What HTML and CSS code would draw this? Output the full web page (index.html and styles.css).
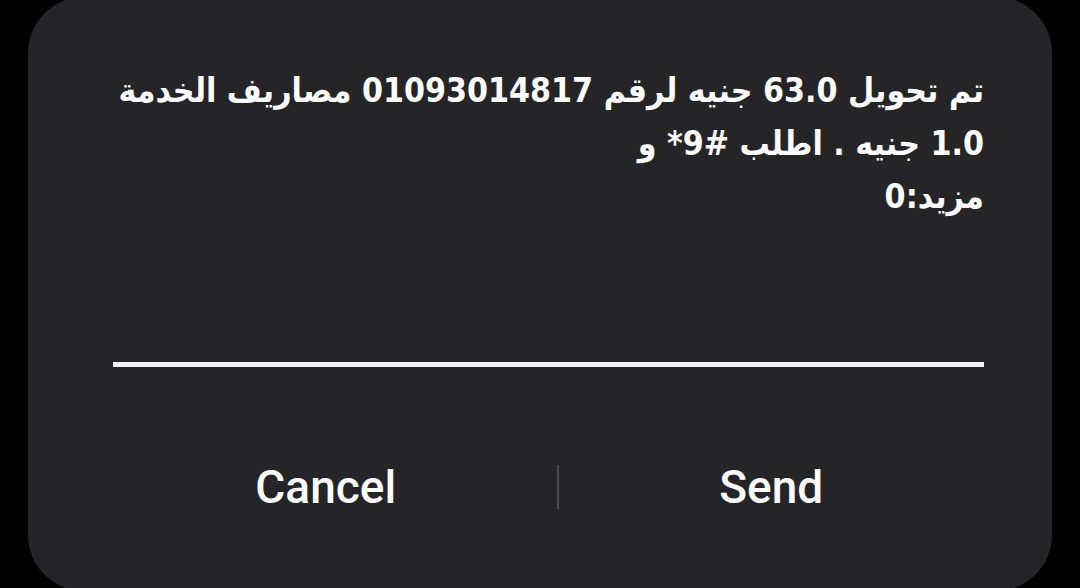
FILE: index.html
```html
<!DOCTYPE html>
<html lang="ar">
<head>
<meta charset="utf-8">
<title>USSD</title>
<link rel="stylesheet" href="styles.css">
</head>
<body>
<div class="dialog">
  <div class="message" dir="rtl">
    <div class="line">تم تحويل 63.0 جنيه لرقم 01093014817 مصاريف الخدمة</div>
    <div class="line">1.0 جنيه . اطلب <bdi dir="ltr">*9#</bdi> و</div>
    <div class="line">مزيد:0</div>
  </div>
  <div class="rule"></div>
  <div class="actions">
    <div class="btn btn-cancel">Cancel</div>
    <div class="sep"></div>
    <div class="btn btn-send">Send</div>
  </div>
</div>
</body>
</html>
```
FILE: styles.css
```css
html, body {
  margin: 0;
  padding: 0;
  background: #000;
  width: 1080px;
  height: 588px;
  overflow: hidden;
}
.dialog {
  box-sizing: border-box;
  width: 1024px;
  height: 594px;
  margin: -3px 0 0 28px;
  padding: 67px 68px 0 85px;
  background: #252527;
  border-radius: 56px;
  display: flex;
  flex-direction: column;
  color: #fbfbfb;
}
.message {
  height: 298px;
  font-family: "DejaVu Sans Condensed", "DejaVu Sans", sans-serif;
  font-stretch: condensed;
  font-size: 33.6px;
  font-weight: bold;
  line-height: 53px;
  text-align: right;
}
.line {
  white-space: nowrap;
}
.rule {
  height: 5px;
  background: #f2f2f4;
}
.actions {
  display: flex;
  align-items: center;
  height: 44px;
  margin-top: 98px;
}
.btn {
  flex: 1;
  text-align: center;
  font-family: Roboto, "DejaVu Sans", sans-serif;
  font-size: 46px;
  font-weight: 500;
  line-height: 44px;
}
.btn-cancel {
  padding-right: 18px;
}
.sep {
  width: 2px;
  height: 44px;
  background: #4b4b4e;
}
```
